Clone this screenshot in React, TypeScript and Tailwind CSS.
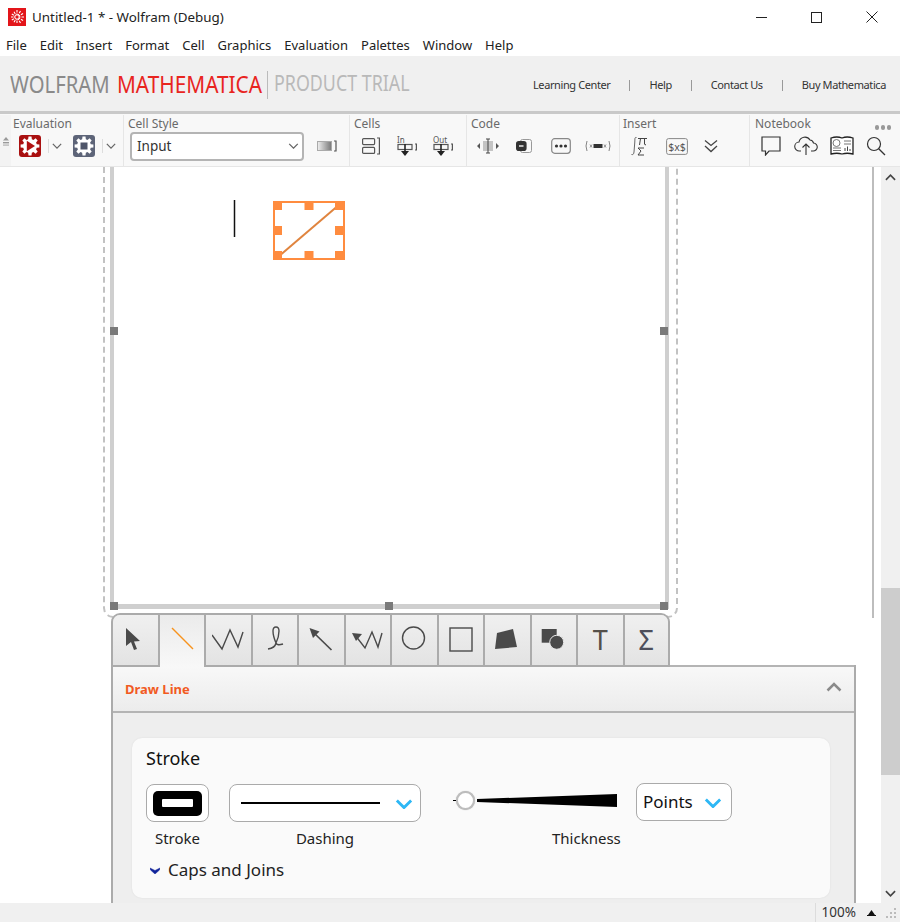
import type { ReactNode } from "react";

const sans = "font-['Noto_Sans','Open_Sans',sans-serif]";

function gearPath(cx: number, cy: number, outer: number, inner: number, teeth: number) {
    let d = "";
    const step = (Math.PI * 2) / teeth;
    for (let i = 0; i < teeth; i++) {
        const a = i * step - Math.PI / 2;
        const pts = [
            [a - step * 0.34, inner],
            [a - step * 0.2, outer],
            [a + step * 0.2, outer],
            [a + step * 0.34, inner],
        ];
        for (const [ang, r] of pts) {
            d += `${d ? "L" : "M"}${(cx + Math.cos(ang) * r).toFixed(2)} ${(cy + Math.sin(ang) * r).toFixed(2)} `;
        }
    }
    return d + "Z";
}

function Chevron({ className = "", color = "#666", w = 10, h = 6, sw = 1.5 }: { className?: string; color?: string; w?: number; h?: number; sw?: number }) {
    return (
        <svg width={w} height={h} viewBox="0 0 12 7" className={className}>
            <path d="M1 1l5 5 5-5" fill="none" stroke={color} strokeWidth={sw} />
        </svg>
    );
}

function AppIcon() {
    const spokes = [0, 30, 60, 90, 120, 150];
    return (
        <svg width="18" height="18" viewBox="0 0 18 18">
            <rect width="18" height="18" fill="#e3151a" />
            {spokes.map((a) => (
                <line key={a} x1="9" y1="2" x2="9" y2="16" stroke="#fff" strokeWidth="1.1" transform={`rotate(${a} 9 9)`} strokeDasharray="2.5 1" />
            ))}
            <circle cx="9" cy="9" r="2.2" fill="#e3151a" stroke="#fff" strokeWidth="1" />
        </svg>
    );
}

function RunGear() {
    return (
        <svg width="22" height="22" viewBox="0 0 22 22">
            <rect width="22" height="22" rx="3" fill="#a91010" />
            <path d={gearPath(11, 11, 9.5, 7, 8)} fill="#fff" />
            <path d="M7.8 5.8l8.2 5.2-8.2 5.2z" fill="#b01212" />
        </svg>
    );
}

function StopGear() {
    return (
        <svg width="22" height="22" viewBox="0 0 22 22">
            <rect width="22" height="22" rx="3" fill="#5d6478" />
            <path d={gearPath(11, 11, 9.5, 7, 8)} fill="#fff" />
            <rect x="7.5" y="7.5" width="7" height="7" fill="#4f5569" />
        </svg>
    );
}

const g = { fill: "none", stroke: "#555", strokeWidth: 1.2 };

function ToolCell({ className, children }: { className: string; children: ReactNode }) {
    return <div className={`flex h-full shrink-0 items-center justify-center ${className}`}>{children}</div>;
}

function ToolGroup({ label, className, labelClass, children }: { label: string; className: string; labelClass: string; children: ReactNode }) {
    return (
        <div className={`flex h-full shrink-0 flex-col border-r border-[#e6e6e6] ${className}`}>
            <div className={`h-[16px] pt-[1px] text-[12px] leading-[16px] text-[#6a6a6a] ${labelClass}`}>{label}</div>
            <div className="flex h-[30px] items-center">{children}</div>
        </div>
    );
}

function OutputIcon({ label }: { label: string }) {
    return (
        <svg width="24" height="26" viewBox="0 0 24 26">
            <text x="2" y="10" fontSize="8" fill="#555">{label}</text>
            <path d="M20 11h1.4v6H20" {...g} />
            <rect x="3" y="11.5" width="14" height="5" {...g} />
            <path d="M10 11v8" stroke="#222" strokeWidth="1.6" />
            <path d="M6 18h8l-4 5z" fill="#222" />
        </svg>
    );
}

function Toolbar() {
    return (
        <div className={`flex h-[52px] bg-[#f8f8f8] pt-[1px] ${sans}`}>
            <div className="flex h-full w-[11px] shrink-0 items-start justify-center bg-[#f3f3f3] pt-[22px]">
                <svg width="8" height="9" viewBox="0 0 8 9">
                    <path d="M4 0l3 3.5H1z" fill="#999" />
                    <rect x="1" y="5" width="6" height="1.4" fill="#999" />
                    <rect x="1" y="7.4" width="6" height="1.4" fill="#bbb" />
                </svg>
            </div>
            <ToolGroup label="Evaluation" className="w-[113px]" labelClass="pl-[2px]">
                <ToolCell className="ml-[8px] w-[22px]"><RunGear /></ToolCell>
                <div className="ml-[7px] h-[14px] w-px bg-[#ddd]" />
                <ToolCell className="ml-[2px] w-[12px]"><Chevron /></ToolCell>
                <ToolCell className="ml-[10px] w-[22px]"><StopGear /></ToolCell>
                <div className="ml-[7px] h-[14px] w-px bg-[#ddd]" />
                <ToolCell className="ml-[2px] w-[12px]"><Chevron /></ToolCell>
            </ToolGroup>
            <ToolGroup label="Cell Style" className="w-[226px]" labelClass="pl-[4px]">
                <div className="ml-[6px] flex h-[29px] w-[174px] items-center justify-between rounded-[4px] border-2 border-[#b4b4b4] bg-white pl-[5px] pr-[3px] text-[13.5px] text-[#333]">
                    <span>Input</span>
                    <Chevron w={11} />
                </div>
                <svg width="20" height="14" viewBox="0 0 20 14" className="ml-[13px]">
                    <defs>
                        <linearGradient id="cellGrad" x1="0" x2="1" y1="0" y2="0">
                            <stop offset="0" stopColor="#f0f0f0" />
                            <stop offset="1" stopColor="#777" />
                        </linearGradient>
                    </defs>
                    <rect x="0.5" y="2.5" width="14" height="9" fill="url(#cellGrad)" stroke="#aaa" />
                    <path d="M17 2h2v10h-2" {...g} />
                </svg>
            </ToolGroup>
            <ToolGroup label="Cells" className="w-[117px]" labelClass="pl-[4px]">
                <ToolCell className="ml-[3px] w-[36px]">
                    <svg width="18" height="18" viewBox="0 0 18 18">
                        <rect x="0.6" y="1.6" width="12" height="6" rx="1" {...g} />
                        <rect x="0.6" y="10.4" width="12" height="6" rx="1" {...g} />
                        <path d="M15 1h2.4v16H15" {...g} />
                    </svg>
                </ToolCell>
                <ToolCell className="w-[36px]"><OutputIcon label="In" /></ToolCell>
                <ToolCell className="w-[36px]"><OutputIcon label="Out" /></ToolCell>
            </ToolGroup>
            <ToolGroup label="Code" className="w-[153px]" labelClass="pl-[4px]">
                <ToolCell className="ml-[3px] w-[36px]">
                    <svg width="22" height="16" viewBox="0 0 22 16">
                        <rect x="6" y="3" width="10" height="10" fill="#c4c4c4" />
                        <path d="M11 1v14M9 1h4M9 15h4" fill="none" stroke="#444" strokeWidth="1" />
                        <path d="M0 8l3-3v6zM22 8l-3-3v6z" fill="#555" />
                    </svg>
                </ToolCell>
                <ToolCell className="w-[35px]">
                    <svg width="16" height="14" viewBox="0 0 16 14">
                        <rect x="4.5" y="0.5" width="11" height="13" rx="2" fill="none" stroke="#999" />
                        <rect x="0.8" y="2.8" width="9" height="8.4" rx="2" fill="#333" stroke="#333" strokeWidth="1.6" />
                        <rect x="3" y="6" width="4.500" height="2" fill="#bbb" />
                    </svg>
                </ToolCell>
                <ToolCell className="w-[39px]">
                    <svg width="20" height="16" viewBox="0 0 20 16">
                        <rect x="0.7" y="0.7" width="18.6" height="14.6" rx="3" fill="none" stroke="#888" strokeWidth="1.2" />
                        <circle cx="5.5" cy="8" r="1.6" fill="#333" />
                        <circle cx="10" cy="8" r="1.6" fill="#333" />
                        <circle cx="14.5" cy="8" r="1.6" fill="#333" />
                    </svg>
                </ToolCell>
                <ToolCell className="w-[35px]">
                    <svg width="26" height="12" viewBox="0 0 26 12">
                        <path d="M2 1Q0 6 2 11M24 1Q26 6 24 11" fill="none" stroke="#777" strokeWidth="0.9" />
                        <path d="M5 4.5l2 3M7 4.5l-2 3M19 4.5l2 3M21 4.5l-2 3" stroke="#777" strokeWidth="0.8" />
                        <rect x="8.5" y="4" width="9" height="4" fill="#333" />
                    </svg>
                </ToolCell>
            </ToolGroup>
            <ToolGroup label="Insert" className="w-[130px]" labelClass="pl-[3px]">
                <ToolCell className="ml-[1px] w-[38px]">
                    <svg width="18" height="20" viewBox="0 0 18 20">
                        <path d="M5.5 1.5C3.5 1 4 3 3.8 6L3 16c-.2 2-1 3-2.5 2.5" fill="none" stroke="#555" strokeWidth="0.9" />
                        <path d="M7 2.5h9M9.5 2.5L8.5 9M13.5 2.5v5.5q0 1 1.5 .8" fill="none" stroke="#444" strokeWidth="1" />
                        <path d="M13 12H7l3 3-3 4h6" fill="none" stroke="#444" strokeWidth="1" />
                    </svg>
                </ToolCell>
                <ToolCell className="w-[36px]">
                    <svg width="22" height="17" viewBox="0 0 22 17">
                        <rect x="0.6" y="0.6" width="20.8" height="15.8" rx="2" fill="none" stroke="#888" />
                        <text x="11" y="12.5" fontSize="10.5" textAnchor="middle" fill="#555">$x$</text>
                    </svg>
                </ToolCell>
                <ToolCell className="w-[32px]">
                    <svg width="14" height="14" viewBox="0 0 14 14">
                        <path d="M1 1.5l6 5 6-5M1 7l6 5.5L13 7" fill="none" stroke="#444" strokeWidth="1.3" />
                    </svg>
                </ToolCell>
            </ToolGroup>
            <div className="relative flex h-full min-w-0 flex-1 flex-col">
                <div className="h-[16px] pl-[5px] pt-[1px] text-[12px] leading-[16px] text-[#6a6a6a]">Notebook</div>
                <div className="absolute right-[9px] top-[10px] flex gap-[1.5px]">
                    <span className="size-[4.5px] rounded-full bg-[#999]" />
                    <span className="size-[4.5px] rounded-full bg-[#999]" />
                    <span className="size-[4.5px] rounded-full bg-[#999]" />
                </div>
                <div className="flex h-[30px] items-center pl-[3px]">
                    <ToolCell className="w-[36px]">
                        <svg width="20" height="20" viewBox="0 0 20 20">
                            <path d="M1 1h18v14H8l-3.500 4v-4H1z" fill="none" stroke="#333" strokeWidth="1.2" />
                        </svg>
                    </ToolCell>
                    <ToolCell className="w-[34px]">
                        <svg width="24" height="20" viewBox="0 0 24 20">
                            <path d="M7 15H5.500a4.500 4.500 0 0 1-.5-9 6 6 0 0 1 11-2 4 4 0 0 1 3.500 3 4 4 0 0 1-.5 8H17" fill="none" stroke="#333" strokeWidth="1.1" />
                            <path d="M12 19V8M8.500 11.500L12 8l3.500 3.500" fill="none" stroke="#333" strokeWidth="1.1" />
                        </svg>
                    </ToolCell>
                    <ToolCell className="w-[38px]">
                        <svg width="24" height="20" viewBox="0 0 24 20">
                            <path d="M1 2Q7 0 12 2Q17 0 23 2V18Q17 16.500 12 18Q7 16.500 1 18Z" fill="#fff" stroke="#222" strokeWidth="1.300" />
                            <circle cx="6.500" cy="7" r="3.500" fill="none" stroke="#777" />
                            <path d="M14 5h7M14 8h7M3 12h8M3 14.500h8" stroke="#666" strokeWidth="0.9" />
                            <path d="M15 15v-3M17.500 15v-4.500M20 15v-2" stroke="#444" strokeWidth="1" />
                        </svg>
                    </ToolCell>
                    <ToolCell className="w-[30px]">
                        <svg width="20" height="20" viewBox="0 0 20 20">
                            <circle cx="8" cy="8" r="6.500" fill="none" stroke="#333" strokeWidth="1.2" />
                            <path d="M12.700 12.700L19 19" stroke="#333" strokeWidth="1.3" />
                        </svg>
                    </ToolCell>
                </div>
            </div>
        </div>
    );
}

function Handle({ className }: { className: string }) {
    return <div className={`absolute size-[8px] bg-[#7a7a7a] ${className}`} />;
}

function Canvas() {
    return (
        <div className="relative h-[451px] w-[874px] border-r-2 border-[#bdbdbd]">
            <div className="absolute -top-[4px] left-[103px] h-[455px] w-[575px] rounded-b-[10px] border-x-2 border-b-2 border-dashed border-[#c2c2c2]" />
            <div className="relative ml-[110px] h-[442px] w-[559px] border-x-[4px] border-b-[5px] border-[#cfcfcf] bg-white">
                <svg width="120" height="70" viewBox="0 0 120 70" className="absolute left-[116px] top-[31px]">
                    <line x1="4.500" y1="2" x2="4.500" y2="39" stroke="#111" strokeWidth="1.500" />
                    <rect x="44" y="4" width="70" height="57" fill="none" stroke="#ff8c3f" strokeWidth="2" />
                    <line x1="48" y1="59" x2="110" y2="6" stroke="#e0843e" strokeWidth="2" />
                    {[
                        [43, 3], [74.500, 3], [105, 3],
                        [43, 28], [105, 28],
                        [43, 53], [74.500, 53], [105, 53],
                    ].map(([x, y]) => (
                        <rect key={`${x}-${y}`} x={x} y={y} width="9" height="9" fill="#ff8c3f" />
                    ))}
                </svg>
                <Handle className="-left-[4px] top-[160px]" />
                <Handle className="-right-[3px] top-[160px]" />
                <Handle className="-bottom-[6px] -left-[4px]" />
                <Handle className="-bottom-[6px] left-[271px]" />
                <Handle className="-bottom-[6px] -right-[3px]" />
            </div>
        </div>
    );
}

const ic = { fill: "none", stroke: "#4a4a4a", strokeWidth: 1.4 };

const tabIcons: ReactNode[] = [
    <path key="a" d="M7 5l14 13-6 .5 3 7.500-3 1-3-8-5 4z" fill="#4a4a4a" />,
    <line key="b" x1="6" y1="5" x2="27" y2="26" stroke="#f7931e" strokeWidth="1.500" />,
    <path key="c" d="M0 12l10 14 8-19 8 17 5-15" {...ic} />,
    <path key="d" d="M9 26q7-1 8-6-3-7-3-12 0-4 3-4 3 0 3 4 0 6-3 12 1 3 7 1" {...ic} />,
    <g key="e">
        <path d="M8 9l18.500 18" {...ic} strokeWidth={1.700} />
        <path d="M4.500 5l10 3.500-6.500 6.500z" fill="#4a4a4a" />
    </g>,
    <g key="f">
        <path d="M3 12l10 13 7-16 6 15 4-14" {...ic} />
        <path d="M0 10l10 1-6 7z" fill="#4a4a4a" />
    </g>,
    <circle key="g" cx="15.500" cy="15" r="11" {...ic} />,
    <rect key="h" x="5" y="5" width="22" height="23" {...ic} />,
    <path key="i" d="M4 26l2-16 16-4 4 18z" fill="#4a4a4a" />,
    <g key="j">
        <rect x="3.700" y="6" width="15" height="13.700" fill="#4a4a4a" />
        <circle cx="18.700" cy="19.300" r="7" fill="#4a4a4a" stroke="#e9e9e9" strokeWidth="1" />
    </g>,
];

function ToolTabs() {
    return (
        <div className="relative -mb-[2px] -mt-[5px] ml-[111px] flex h-[54px] w-[559px] overflow-hidden rounded-t-[9px] border-x-2 border-t-2 border-[#ababab] bg-[#e8e8e8]">
            {tabIcons.map((icon, i) => (
                <div
                    key={i}
                    className={`flex h-full w-[46.500px] shrink-0 items-center justify-center border-r-2 border-[#ababab] ${
                        i === 1 ? "bg-gradient-to-b from-[#ebebeb] to-[#f8f8f8] pb-[4px]" : "border-b-2 bg-gradient-to-b from-[#f0f0f0] to-[#e3e3e3] pb-[2px]"
                    }`}
                >
                    <svg width="32" height="32" viewBox="0 0 32 32">{icon}</svg>
                </div>
            ))}
            <div className="flex h-full w-[46.500px] shrink-0 items-center justify-center border-r-2 border-b-2 border-[#ababab] bg-gradient-to-b from-[#f0f0f0] to-[#e3e3e3] font-['Liberation_Serif',serif] text-[27px] text-[#55504a]">T</div>
            <div className="flex h-full min-w-0 flex-1 items-center justify-center border-b-2 border-[#ababab] bg-gradient-to-b from-[#f0f0f0] to-[#e3e3e3] font-['Liberation_Serif',serif] text-[27px] text-[#4d4f5c]">Σ</div>
        </div>
    );
}

function Field({ className, children }: { className: string; children: ReactNode }) {
    return <div className={`flex items-center rounded-[8px] border-[1.5px] border-[#aaaaaa] bg-white ${className}`}>{children}</div>;
}

function StrokeCard() {
    return (
        <div className="ml-[19px] mr-[24px] h-[160px] rounded-[10px] bg-[#fafafa] pl-[14px] pt-[8px] shadow-[0_0_2px_rgba(0,0,0,0.08)]">
            <div className="h-[24px] text-[18px] leading-[24px] text-[#111]">Stroke</div>
            <div className="mt-[14px] flex items-start text-[15px] text-[#222]">
                <div className="flex w-[63px] flex-col items-center">
                    <Field className="h-[38px] w-[63px] justify-center">
                        <div className="flex h-[25px] w-[49px] items-center justify-center rounded-[5px] bg-black">
                            <div className="h-[8px] w-[31px] rounded-[1px] bg-white" />
                        </div>
                    </Field>
                    <div className="mt-[5px] leading-[22px]">Stroke</div>
                </div>
                <div className="ml-[20px] flex w-[192px] flex-col items-center">
                    <Field className="h-[38px] w-[192px] pl-[11px]">
                        <div className="h-[1.500px] w-[139px] bg-black" />
                        <Chevron className="ml-[14px] mt-[1px]" color="#2db7f5" w={20} h={10} sw={2} />
                    </Field>
                    <div className="mt-[5px] leading-[22px]">Dashing</div>
                </div>
                <div className="ml-[32px] flex w-[164px] flex-col">
                    <div className="flex h-[33px] items-center">
                        <div className="h-[1.500px] w-[3px] bg-black" />
                        <div className="relative size-[19px] shrink-0 rounded-full border-2 border-[#bdbdbd] bg-white shadow-[0_0_1px_rgba(0,0,0,0.3)]" />
                        <svg width="140" height="13" viewBox="0 0 140 13" className="ml-[2px]">
                            <path d="M0 5L140 0V13L0 8z" fill="#000" />
                        </svg>
                    </div>
                    <div className="ml-[99px] mt-[10px] w-[80px] leading-[22px]">Thickness</div>
                </div>
                <Field className="-mt-[1px] ml-[19px] h-[38px] w-[96px] pl-[6px] text-[17px] text-[#111]">
                    <span>Points</span>
                    <Chevron className="ml-[10px] mt-[1px]" color="#2db7f5" w={20} h={10} sw={2} />
                </Field>
            </div>
            <div className="mt-[9px] flex h-[24px] items-center text-[17px] text-[#222]">
                <svg width="10" height="7" viewBox="0 0 10 7" className="ml-[4px]">
                    <path d="M0 1l5 2.500L10 1 9.500 3 5 7 .5 3z" fill="#10239a" stroke="#10239a" strokeWidth="0.500" />
                </svg>
                <span className="ml-[8px]">Caps and Joins</span>
            </div>
        </div>
    );
}

function Panel() {
    return (
        <div className="ml-[111px] flex h-[238px] w-[745px] flex-col border-x-2 border-[#ababab] bg-[#eeeeee]">
            <div className="flex h-[48px] shrink-0 items-center justify-between border-y-2 border-y-[#b4b4b4] bg-gradient-to-b from-[#f8f8f8] to-[#ececec] pl-[12px] pr-[12px] pt-[1px]">
                <span className="text-[13px] font-bold text-[#f15a22]">Draw Line</span>
                <svg width="16" height="10" viewBox="0 0 16 10" className="-mt-[6px]">
                    <path d="M1.500 8.500L8 2l6.500 6.500" fill="none" stroke="#8a8a8a" strokeWidth="2.500" />
                </svg>
            </div>
            <div className="pt-[25px]">
                <StrokeCard />
            </div>
        </div>
    );
}

export default function App() {
    const menus = ["File", "Edit", "Insert", "Format", "Cell", "Graphics", "Evaluation", "Palettes", "Window", "Help"];
    return (
        <div className={`flex h-[922px] w-[900px] flex-col overflow-hidden bg-white ${sans}`}>
            <div className="flex h-[34px] shrink-0 items-center pl-[8px]">
                <AppIcon />
                <span className="ml-[6px] text-[13.400px] text-[#222]">Untitled-1 * - Wolfram (Debug)</span>
                <div className="ml-auto flex items-center">
                    <svg width="11" height="11" viewBox="0 0 11 11" className="mr-[44px]"><path d="M0 5.500h11" stroke="#222" /></svg>
                    <svg width="11" height="11" viewBox="0 0 11 11" className="mr-[44px]"><rect x="0.500" y="0.500" width="10" height="10" fill="none" stroke="#222" /></svg>
                    <svg width="12" height="12" viewBox="0 0 12 12" className="mr-[22px]"><path d="M.5.5l11 11M11.500.5l-11 11" stroke="#222" /></svg>
                </div>
            </div>
            <div className="flex h-[22px] shrink-0 items-center gap-[13px] pl-[6px] pt-[2px] text-[13px] text-[#222]">
                {menus.map((m) => (
                    <span key={m}>{m}</span>
                ))}
            </div>
            <div className="flex h-[58px] shrink-0 items-center border-b-[3px] border-[#c9c9c9] bg-[#f0f0f0] pl-[10px] pr-[14px] pt-[1px]">
                <span className="w-[99px] origin-left scale-x-[0.846] whitespace-nowrap font-['Lato',sans-serif] text-[24px] text-[#8a8a8a]">WOLFRAM</span>
                <span className="ml-[8px] w-[143px] origin-left scale-x-[0.867] whitespace-nowrap font-['Lato',sans-serif] text-[24px] text-[#e8251f]">MATHEMATICA</span>
                <div className="ml-[7px] mt-[2px] h-[28px] w-px bg-[#bbb]" />
                <span className="ml-[6px] w-[134px] origin-left scale-x-[0.85] whitespace-nowrap font-['Lato',sans-serif] text-[21px] text-[#b9b9b9]">PRODUCT TRIAL</span>
                <div className="ml-auto mt-[2px] flex items-center text-[11px] tracking-[-0.4px] text-[#333]">
                    <span>Learning Center</span>
                    <span className="mx-[19px] h-[11px] w-px bg-[#999]" />
                    <span>Help</span>
                    <span className="mx-[19px] h-[11px] w-px bg-[#999]" />
                    <span>Contact Us</span>
                    <span className="mx-[19px] h-[11px] w-px bg-[#999]" />
                    <span>Buy Mathematica</span>
                </div>
            </div>
            <Toolbar />
            <div className="flex min-h-0 flex-1 border-t border-[#e6e6e6]">
                <div className="min-w-0 flex-1 overflow-hidden">
                    <Canvas />
                    <ToolTabs />
                    <Panel />
                </div>
                <div className="flex w-[19px] shrink-0 flex-col bg-[#f0f0f0]">
                    <div className="flex h-[20px] items-center justify-center">
                        <Chevron className="rotate-180" color="#444" w={11} h={7} sw={1.800} />
                    </div>
                    <div className="mt-[401px] h-[187px] bg-[#cdcdcd]" />
                    <div className="mt-auto flex h-[20px] items-center justify-center">
                        <Chevron color="#444" w={11} h={7} sw={1.800} />
                    </div>
                </div>
            </div>
            <div className="flex h-[19px] shrink-0 items-center justify-end bg-[#f0f0f0] pr-[3px] text-[13.500px] text-[#333]">
                <div className="flex h-full items-center border-l border-[#dcdcdc] pl-[6px]">
                    <span>100%</span>
                    <svg width="9" height="6" viewBox="0 0 9 6" className="ml-[11px]"><path d="M0 5h9v1H0zM4.500 0L8 5H1z" fill="#111" /></svg>
                    <svg width="11" height="11" viewBox="0 0 11 11" className="ml-[10px]" fill="#bbb">
                        <rect x="8" y="1" width="2" height="2" />
                        <rect x="4" y="5" width="2" height="2" />
                        <rect x="8" y="5" width="2" height="2" />
                        <rect x="0" y="9" width="2" height="2" />
                        <rect x="4" y="9" width="2" height="2" />
                        <rect x="8" y="9" width="2" height="2" />
                    </svg>
                </div>
            </div>
        </div>
    );
}
